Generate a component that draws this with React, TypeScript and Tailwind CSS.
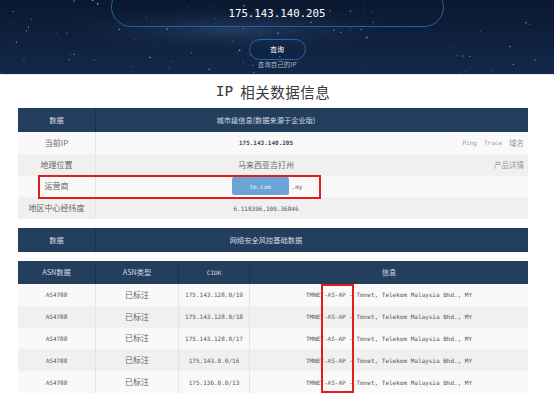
import React from "react"

interface AsnRow {
  asn: string
  type: string
  cidr: string
  info: string
}

const asnRows: AsnRow[] = [
  { asn: "AS4788", type: "已标注", cidr: "175.143.128.0/19", info: "TMNET-AS-AP - Tmnet, Telekom Malaysia Bhd., MY" },
  { asn: "AS4788", type: "已标注", cidr: "175.143.128.0/18", info: "TMNET-AS-AP - Tmnet, Telekom Malaysia Bhd., MY" },
  { asn: "AS4788", type: "已标注", cidr: "175.143.128.0/17", info: "TMNET-AS-AP - Tmnet, Telekom Malaysia Bhd., MY" },
  { asn: "AS4788", type: "已标注", cidr: "175.143.0.0/16", info: "TMNET-AS-AP - Tmnet, Telekom Malaysia Bhd., MY" },
  { asn: "AS4788", type: "已标注", cidr: "175.136.0.0/13", info: "TMNET-AS-AP - Tmnet, Telekom Malaysia Bhd., MY" },
]

// seeded random so the star field stays put between renders
const stars = (() => {
  let s = 7
  const rnd = () => {
    s = (s * 9301 + 49297) % 233280
    return s / 233280
  }
  return Array.from({ length: 140 }, () => ({
    x: rnd() * 554,
    y: rnd() * 75,
    r: rnd() * 0.7 + 0.2,
    o: rnd() * 0.5 + 0.15,
  }))
})()

const StarField = () => (
  <svg className="absolute inset-0" width="554" height="75">
    <defs>
      <radialGradient id="milky" cx="0.42" cy="0.4" r="0.35">
        <stop offset="0%" stopColor="#3b5a86" stopOpacity="0.5" />
        <stop offset="100%" stopColor="#0b1a33" stopOpacity="0" />
      </radialGradient>
    </defs>
    <rect width="554" height="75" fill="url(#milky)" />
    {stars.map((st, i) => (
      <circle key={i} cx={st.x} cy={st.y} r={st.r} fill="#ffffff" opacity={st.o} />
    ))}
  </svg>
)

const InfoRow = ({ label, children, right, odd }: { label: string; children: React.ReactNode; right?: React.ReactNode; odd: boolean }) => (
  <div className={`flex h-[21.75px] ${odd ? "bg-[#f9f9f9]" : "bg-[#f0f0f0]"}`}>
    <div className="w-[78px] flex items-center justify-center text-[8px] text-[#666] border-r border-[#e4e4e4]">
      {label}
    </div>
    <div className="flex-1 flex items-center justify-center">{children}</div>
    <div className="w-[92px] flex items-center justify-end gap-[7px] pr-[4px] text-[#9a9a9a]">{right}</div>
  </div>
)

const NavyHead = ({ second, className = "" }: { second: string; className?: string }) => (
  <div className={`flex h-[24px] bg-[#243f5d] text-[#d3dbe5] text-[7.25px] ${className}`}>
    <div className="w-[78px] flex items-center justify-center border-r border-[#1b3350]">数据</div>
    <div className="flex-1 flex items-center justify-center">{second}</div>
    <div className="w-[92px]" />
  </div>
)

export default function App() {
  return (
    <div className="w-[554px] h-[412px] bg-white overflow-hidden relative font-['Noto_Sans_CJK_SC','Noto_Sans',sans-serif]">
      {/* banner */}
      <div className="relative h-[75px] bg-gradient-to-b from-[#0a1830] to-[#13284a] overflow-hidden border-b border-[#e6e6e6]">
        <StarField />
        <div className="relative flex flex-col items-center">
          <div className="mt-[-13px] w-[333px] h-[40px] rounded-full border-[1.5px] border-[#1b64a5] flex items-end justify-center pb-[6px]">
            <span className="text-[10.75px] text-white leading-none font-['DejaVu_Sans_Mono',monospace]">175.143.140.205</span>
          </div>
          <div className="mt-[12px] w-[57px] h-[21px] rounded-full border-[1.5px] border-[#1b6ab3] flex items-center justify-center">
            <span className="text-[7px] text-white">查询</span>
          </div>
          <div className="mt-[1px] text-[6.5px] text-[#a8b4c6] leading-none">查询自己的IP</div>
        </div>
      </div>

      {/* content */}
      <div className="ml-[18px] w-[510px]">
        <div className="h-[33px] flex items-center justify-center text-[14.5px] text-[#3a3a3a]">
          <span className="font-['DejaVu_Sans_Mono',monospace]">IP</span>
          <span className="ml-[7px] tracking-[0.5px]">相关数据信息</span>
        </div>

        {/* city level info */}
        <NavyHead second="城市级信息(数据来源于企业版)" />
        <InfoRow
          label="当前IP"
          odd
          right={
            <>
              <span className="text-[6px] font-['DejaVu_Sans_Mono',monospace]">Ping</span>
              <span className="text-[6px] font-['DejaVu_Sans_Mono',monospace]">Trace</span>
              <span className="text-[7.5px]">域名</span>
            </>
          }
        >
          <span className="text-[6px] text-[#3b4a66] font-bold font-['DejaVu_Sans_Mono',monospace]">175.143.140.205</span>
        </InfoRow>
        <InfoRow label="地理位置" odd={false} right={<span className="text-[7.5px]">产品详情</span>}>
          <span className="text-[8px] text-[#666]">马来西亚吉打州</span>
        </InfoRow>
        <InfoRow label="运营商" odd>
          <div className="flex items-center ml-[2px]">
            <div className="w-[57px] h-[18px] rounded-[2px] bg-[#6ba4d6] flex items-center justify-center text-[6px] text-[#e8f1fa] font-['DejaVu_Sans_Mono',monospace]">
              tm.com
            </div>
            <span className="ml-[3px] text-[6px] text-[#666] font-['DejaVu_Sans_Mono',monospace]">.my</span>
          </div>
        </InfoRow>
        <InfoRow label="地区中心经纬度" odd={false}>
          <span className="text-[6px] text-[#555] font-['DejaVu_Sans_Mono',monospace]">6.118396,100.36846</span>
        </InfoRow>

        {/* risk control */}
        <NavyHead second="网络安全风控基础数据" className="mt-[9px]" />

        {/* ASN table */}
        <div className="mt-[9px] flex h-[23px] bg-[#243f5d] text-[#d3dbe5] text-[7.25px]">
          <div className="w-[78px] flex items-center justify-center border-r border-[#1b3350]">ASN数据</div>
          <div className="w-[83px] flex items-center justify-center border-r border-[#1b3350]">ASN类型</div>
          <div className="w-[71px] flex items-center justify-center border-r border-[#1b3350] text-[6px] font-['DejaVu_Sans_Mono',monospace]">CIDR</div>
          <div className="flex-1 flex items-center justify-center">信息</div>
        </div>
        {asnRows.map((r, i) => (
          <div key={i} className={`flex h-[21.8px] text-[#555] ${i % 2 === 0 ? "bg-[#f9f9f9]" : "bg-[#f0f0f0]"}`}>
            <div className="w-[78px] flex items-center justify-center border-r border-[#e4e4e4] text-[6px] font-['DejaVu_Sans_Mono',monospace]">{r.asn}</div>
            <div className="w-[83px] flex items-center justify-center border-r border-[#e4e4e4] text-[8px] text-[#666]">{r.type}</div>
            <div className="w-[71px] flex items-center justify-center border-r border-[#e4e4e4] text-[6px] font-['DejaVu_Sans_Mono',monospace]">{r.cidr}</div>
            <div className="flex-1 flex items-center justify-center text-[6px] font-['DejaVu_Sans_Mono',monospace]">{r.info}</div>
          </div>
        ))}
      </div>

      {/* red highlight boxes */}
      <div className="absolute left-[38px] top-[175px] w-[283px] h-[24px] border-2 border-[#e51c1c]" />
      <div className="absolute left-[321px] top-[284px] w-[33px] h-[109px] border-2 border-[#e51c1c]" />
    </div>
  )
}
